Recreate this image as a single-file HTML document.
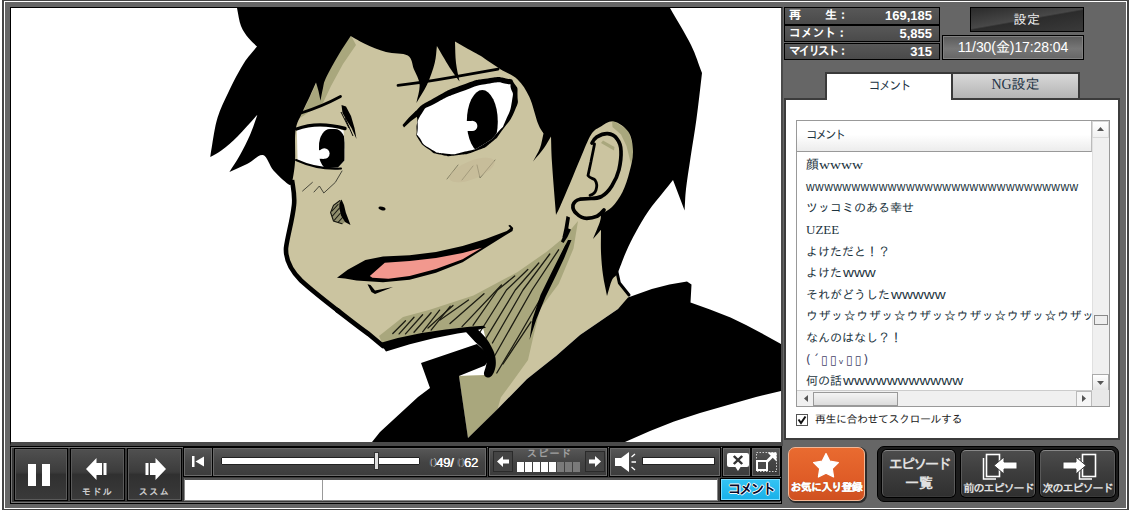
<!DOCTYPE html>
<html lang="ja"><head><meta charset="utf-8"><title>player</title>
<style>
html,body{margin:0;padding:0;background:#fff;}
body{width:1131px;height:510px;overflow:hidden;position:relative;font-family:"Liberation Sans","IPAGothic","Noto Sans CJK JP",sans-serif;}
.abs{position:absolute;box-sizing:border-box;}
#outer{left:2px;top:-1px;width:1127px;height:512px;background:#666;border:2px solid #444;}
#outer2{left:4px;top:1px;width:1123px;height:508px;border:1px solid #fff;}
#video{left:10px;top:7px;width:773px;height:439px;border:1px solid #000;border-right:2px solid #4a4a4a;border-bottom:4px solid #4a4a4a;background:#fff;}
.stat{left:784px;width:156px;border:1px solid #000;background:linear-gradient(#585858,#4a4a4a);color:#fff;font-weight:bold;font-size:12px;line-height:15px;}
.stat b{position:absolute;left:4px;top:0;letter-spacing:0px}
.stat i{position:absolute;right:7px;top:0;font-style:normal;font-size:13px}
#tabs .t{font-size:12px;color:#234;text-align:center;}
.row{position:absolute;left:9px;white-space:nowrap;font-size:12px;line-height:16px;color:#1c3440;height:16px}
.ser{font-family:"Liberation Serif","IPAGothic",serif;font-size:13px}
.btn{background:linear-gradient(#505050,#3c3c3c 45%,#303030 50%,#3a3a3a);border:1px solid #000;box-shadow:inset 0 0 0 1px #5a5a5a;}
.sec{background:linear-gradient(#585858,#444 50%,#3c3c3c);border:1px solid #000;box-shadow:inset 0 0 0 1px #6a6a6a;}
.ep{border-radius:5px;background:linear-gradient(#4c4c4c,#3c3c3c 50%,#303030);border:1px solid #5a5a5a;border-top-color:#888;border-bottom-color:#3a3a3a;box-shadow:0 0 0 1px #000}
.eptx{text-align:center;font-weight:bold;color:#e0e0e0;white-space:nowrap}
.fw{display:inline-block;transform:scaleX(1.260);transform-origin:0 50%;margin-left:1px}
</style></head><body>
<div id="outer" class="abs"></div><div id="outer2" class="abs"></div>
<div id="video" class="abs"></div>
<svg class="abs" style="left:11px;top:8px" width="770" height="434" viewBox="11 8 770 434">
<rect x="11" y="8" width="770" height="434" fill="#fff"/>
<!-- skin -->
<path id="skin" fill="#cbc4a0" d="M300,60 L294,130 L291,182 L293,200 L289,225 L284,248.500 L288,266 L300,282 L338,313 L367.600,335 L385,349 L414.700,341 L450,329 L483,327 L488,348 L494,363 L490,375 L459,376 L468,438 L497.600,409 L527,379 L556,356 L580,335 L618,309 L630,298 L619,283 L616.500,271 L622,256 L650,200 L630,186 L637,157 L633,133 L616,118 L560,50 L400,30 L340,35 Z"/>
<!-- neck shadow -->
<path fill="#a9a77d" d="M379,336 L403,317 L429,310 L473.500,295.600 L517.600,272 L547,251.500 L564.700,236.800 L578,221 L573.500,248.500 L558.800,283.800 L540,309 L533,338 L528,360 L514,379.600 L500.800,397.600 L497.600,409 L468,438 L459,376 L490,375 L494,363 L488,348 L483,327 L450,329 L414.7,341 L385,349 Z"/>
<!-- forehead hair shadow -->
<path fill="#a9a77d" d="M300,118 L316,84 L330,66 L350.700,35 L356,45 L343,64 L331,86 L323,103 L312,110 Z"/>
<!-- ear shadow -->
<path fill="#a9a77d" d="M612,120 L628,130 L634.500,150 L631,164 L626.500,146 L621,134.500 L612.500,127 Z"/>
<path fill="#a9a77d" d="M601,143 L614,150.500 L614.500,147 L603,140.500 Z"/>
<!-- hatch -->
<g stroke="#1c1c12" stroke-width="1.300" stroke-linecap="round" stroke-linejoin="round" fill="none">
<path d="M566,245.4 L543.5,293.5 L520,334 L496.8,373"/>
<path d="M558.6,249.8 L532,290 L494,357"/>
<path d="M549.8,254 L523,290 L492.4,343"/>
<path d="M538.8,263 L515.3,290 L485.3,339.4"/>
<path d="M527.8,269.5 L506.5,290 L480,332"/>
<path d="M514.7,276 L497.6,290 L473,325.3"/>
<path d="M501.5,285 L462,326.6"/>
<path d="M484,293.7 L450,323.5"/>
<path d="M468.5,300 L440,320"/>
<path d="M531,321.8 L503,364"/>
<path d="M453,305.500 L428,328"/>
<path d="M405.5,320.7 L392.8,333.5"/>
<path d="M414.0,317.3 L399.1,333.9"/>
<path d="M422.6,314.8 L405.5,333.9"/>
<path d="M431.1,312.7 L414.0,332.2"/>
<path d="M439.6,310.1 L422.6,331.8"/>
<path d="M450.2,306.3 L431.1,330.1"/>
</g>
<!-- neck tendon -->
<path fill="#000" d="M571.500,240 L564,258.500 L556,275.500 L545.500,297 L536.500,319 L529.500,340 L532.500,319 L540.500,295 L551.500,272.500 L560,255.500 L568,240 Z"/>
<path fill="#000" d="M567,228 L571,229.500 L567.500,237 L563.500,243 L561,241.500 L563.500,235 Z"/>
<path fill="#000" d="M566.500,216 L570,217.500 L568,230 L564.500,238 L562.500,237 L564.500,228 Z"/>
<!-- clothing -->
<path fill="#000" d="M421,363 L477,344 L486,352 L488,361 L485,365.500 L459,376 L468,438 L497.600,409 L527,379 L556,356 L580,335 L618,309 L628,297.6 L651.800,289 L669.400,284.400 L687,281.500 L691.500,284.400 L690.500,302.500 L710,309.500 L730.500,317.500 L746,325 L760.700,332.800 L781,344 L781,391 L756,397 L730.500,404.300 L700,413 L674,421.500 L650,431 L625,442 L372,442 L380,432 L418,397 L430,388 Z"/>
<path fill="none" stroke="#000" stroke-width="3" stroke-linecap="round" d="M616.500,270 L619.400,283 L629,295"/>
<!-- jaw line -->
<path fill="#000" d="M379,341.500 L381,342.700 L397.800,338 L421.700,333 L445.600,329.600 L469.600,326.700 L483.500,325.800 L486,327.500 L482.700,328.600 L474.300,331 L457.600,333.400 L433.700,338.300 L409.800,344.300 L386,351.500 Z"/>
<path fill="#000" d="M466,328 L474,327 C480,331 488,338 493.500,351 C496,357 496.500,364 495,369 C494,373 492,377 488.700,377.600 C485.500,377.600 483.500,375.500 484,372.500 C485,369 487,365 486.800,358 C485.500,352 482,347.500 478,344.500 C474,341 470,336 466,332 Z"/>
<!-- face outline -->
<path fill="none" stroke="#000" stroke-width="4.600" stroke-linejoin="round" d="M292,180 C293.500,190 295,196 294,205 C292.500,220 287.500,236 286,248 C285.500,258 288.500,268 301,280.500 C312,290.500 326,301.500 339,311.500"/>
<path fill="none" stroke="#000" stroke-width="4.800" stroke-linejoin="round" stroke-linecap="round" d="M337,310 C348,318.500 358,326.500 368.600,334 L383,346"/>
<!-- hair -->
<path id="hair" fill="#000" d="M237.0,8.0 C238.3,14.0 239.1,21.0 241.0,26.0 C242.9,31.0 245.8,34.6 248.5,38.0 C251.2,41.4 254.2,43.7 257.0,46.5 C252.7,52.0 248.7,55.6 244.0,63.0 C239.3,70.4 233.4,81.9 229.0,91.0 C224.6,100.1 220.5,108.3 217.6,117.6 C214.7,126.9 213.0,140.4 211.8,147.0 C210.6,153.6 210.8,153.7 210.3,157.0 C214.2,154.7 217.4,153.5 222.0,150.0 C226.6,146.5 232.1,141.9 238.0,136.0 C243.9,130.1 250.9,121.8 257.4,114.7 C254.9,121.5 252.9,128.3 250.0,135.0 C247.1,141.7 243.4,148.8 240.0,155.0 C236.6,161.2 232.9,166.3 229.4,172.0 C235.3,169.3 241.4,166.8 247.0,164.0 C252.6,161.2 258.6,153.9 263.0,155.0 C267.4,156.1 269.3,165.8 273.5,170.6 C277.7,175.4 284.9,181.8 288.0,184.0 C291.1,186.2 290.7,184.0 292.0,184.0 C293.0,176.7 294.4,171.0 295.0,162.0 C295.6,153.0 294.4,138.2 295.6,130.0 C296.8,121.8 299.6,118.7 302.0,113.0 C304.4,107.3 307.7,101.1 310.0,96.0 C312.3,90.9 314.0,87.0 316.0,82.5 C316.8,85.3 317.8,88.0 318.5,91.0 C319.2,94.0 319.8,97.5 320.5,100.8 C321.3,96.5 322.1,91.8 323.0,88.0 C323.9,84.2 323.3,83.6 325.9,78.0 C328.5,72.4 334.7,61.5 338.8,54.5 C342.9,47.5 346.7,42.2 350.7,36.0 C355.4,38.6 358.8,41.0 364.7,43.7 C370.6,46.4 378.8,50.0 386.0,52.0 C393.2,54.0 403.1,52.7 407.8,55.6 C412.5,58.5 412.0,64.8 414.0,69.6 C416.0,74.4 419.2,79.1 419.6,84.7 C420.0,90.3 417.5,96.9 416.4,103.0 C419.9,96.9 423.9,91.4 427.0,84.7 C430.1,78.0 433.1,69.5 434.7,63.0 C436.3,56.5 436.2,51.6 436.9,45.9 C441.6,53.8 447.2,63.7 451.0,69.6 C454.8,75.5 456.7,77.5 459.5,81.4 C458.3,75.3 456.8,69.6 456.0,63.0 C455.2,56.4 455.3,48.7 455.0,41.6 C459.3,44.1 463.8,46.7 468.0,49.0 C472.2,51.3 474.7,52.3 480.0,55.6 C485.3,58.9 493.7,65.0 500.0,69.0 C506.3,73.0 512.7,74.7 517.6,79.4 C522.5,84.1 526.0,89.7 529.4,97.0 C532.8,104.3 535.6,117.4 538.0,123.5 C540.4,129.6 541.7,130.2 543.5,133.5 C542.3,138.3 541.8,143.3 540.0,148.0 C538.2,152.7 535.3,157.0 533.0,161.5 C536.7,157.0 541.0,152.2 544.0,148.0 C547.0,143.8 548.7,140.3 551.0,136.5 C551.3,145.3 551.2,149.9 552.0,163.0 C552.8,176.1 554.7,197.7 556.0,215.0 C557.3,212.3 557.6,212.3 560.0,206.8 C562.4,201.3 567.1,190.3 570.6,182.0 C574.1,173.7 577.6,164.9 581.0,157.0 C584.4,149.1 587.8,139.7 591.0,134.7 C594.2,129.7 596.2,129.2 600.0,127.0 C603.8,124.8 609.0,120.6 613.8,121.4 C618.5,122.2 625.3,127.1 628.5,132.0 C631.7,136.9 632.8,144.4 633.0,151.0 C633.2,157.6 631.2,165.0 629.5,171.8 C627.8,178.6 625.4,186.1 622.5,192.0 C619.6,197.9 615.6,203.3 612.0,207.0 C608.4,210.7 604.7,211.7 601.0,214.0 C600.7,216.5 601.3,217.3 600.0,221.5 C598.7,225.7 595.3,233.2 593.0,239.0 C595.7,235.9 598.3,232.8 601.0,229.7 C601.0,237.1 600.7,244.4 601.0,252.0 C601.3,259.6 602.0,267.7 603.0,275.0 C604.0,282.3 605.7,289.0 607.0,296.0 C608.7,290.7 610.2,283.8 612.0,280.0 C613.8,276.2 615.3,277.7 617.6,273.0 C619.9,268.3 622.9,258.9 626.0,252.0 C629.1,245.1 632.2,238.6 636.0,231.8 C639.8,225.0 644.0,217.5 648.5,211.0 C653.0,204.5 658.9,197.8 663.0,192.6 C667.1,187.4 669.7,184.2 673.0,180.0 C676.9,190.2 680.7,200.3 684.6,210.5 C685.1,203.3 685.0,197.9 686.0,189.0 C687.0,180.1 688.9,168.7 690.6,157.0 C692.4,145.3 694.6,132.8 696.5,118.8 C698.4,104.8 700.2,88.3 702.0,73.0 C698.3,63.7 696.3,55.8 691.0,45.0 C685.7,34.2 677.0,20.3 670.0,8.0 C525.7,8.0 381.3,8.0 237.0,8.0 Z"/>
<!-- ear lines -->
<path fill="none" stroke="#000" stroke-width="3.700" stroke-linecap="round" stroke-linejoin="round" d="M592,143 C594,139 596,137.500 597,136.800 C601,134.500 604,133.500 607.600,133.700 C612,134 615,136 617,138.800 C619.500,142 621,146 621,151 C621.300,157 620.500,163 619,169.700 C617.500,176 615,181 611.800,186 C609,190.500 605,194.500 601.500,196.500 C598,198.300 595,198.500 591,198.500 L580,199.200 C577,199.800 574,202 573,205 C572.500,208.500 574,211.500 576.500,213.500 C579.500,216.500 583,218.500 586.800,218.400 C590.500,218.300 594,217.500 597,216.300 C600,214.500 602,212.500 604,210"/>
<path fill="none" stroke="#000" stroke-width="2.800" stroke-linecap="round" stroke-linejoin="round" d="M594.500,144 C593.500,150 592,156 591,161.500 L588,175.500 C590,178.500 593.500,178.500 595,180 C597,183 597,187 596,190 C595,193 592.500,194.500 590,195.400"/>
<!-- right eye -->
<path fill="#000" d="M415.6,111.5 C421.8,104.2 420.2,105.9 436.0,97.0 C451.8,88.1 445.8,90.9 463.0,84.7 C480.2,78.5 473.3,80.6 487.6,78.5 C501.9,76.4 497.1,76.8 506.0,78.5 C514.9,80.2 510.6,78.2 514.4,83.7 C518.2,89.2 517.5,85.7 517.5,95.0 C517.5,104.3 519.6,99.7 514.4,111.5 C509.2,123.3 509.5,120.3 502.0,130.5 C494.5,140.7 500.1,135.3 491.8,142.0 C483.5,148.7 488.7,146.1 477.0,150.5 C465.3,154.9 469.1,153.8 456.8,155.2 C444.5,156.6 449.3,156.5 440.0,154.6 C430.7,152.7 436.1,154.5 429.0,149.5 C421.9,144.5 422.8,146.0 418.7,139.5 C414.6,133.0 417.1,136.8 416.6,130.0 C416.1,123.2 417.6,125.2 417.3,119.0 C417.0,112.8 409.4,118.8 415.6,111.5 Z"/>
<path fill="#000" d="M402.500,125 L409,117.500 L416,110.800 L420,114.500 L411,121 L404,127.500 Z"/>
<path fill="#fff" d="M421.8,113.5 C427.9,104.5 422.3,110.5 436.0,103.0 C449.7,95.5 445.8,97.4 463.0,91.0 C480.2,84.6 473.3,86.1 487.6,83.7 C501.9,81.3 498.2,82.0 506.0,83.7 C513.8,85.4 509.0,83.0 511.0,88.8 C513.0,94.6 513.7,90.7 512.0,101.0 C510.3,111.3 510.7,109.4 506.0,119.7 C501.3,130.0 505.5,123.8 498.0,132.0 C490.5,140.2 494.5,137.9 483.5,144.4 C472.5,150.9 477.3,148.5 465.0,151.6 C452.7,154.7 458.2,154.7 446.5,153.7 C434.8,152.7 438.9,153.7 430.0,148.5 C421.1,143.3 423.8,144.2 419.7,138.0 C415.6,131.8 416.9,138.2 417.6,130.0 C418.3,121.8 415.7,122.5 421.8,113.5 Z"/>
<clipPath id="re"><path d="M421.8,113.5 C427.9,104.5 422.3,110.5 436.0,103.0 C449.7,95.5 445.8,97.4 463.0,91.0 C480.2,84.6 473.3,86.1 487.6,83.7 C501.9,81.3 498.2,82.0 506.0,83.7 C513.8,85.4 509.0,83.0 511.0,88.8 C513.0,94.6 513.7,90.7 512.0,101.0 C510.3,111.3 510.7,109.4 506.0,119.7 C501.3,130.0 505.5,123.8 498.0,132.0 C490.5,140.2 494.5,137.9 483.5,144.4 C472.5,150.9 477.3,148.5 465.0,151.6 C452.7,154.7 458.2,154.7 446.5,153.7 C434.8,152.7 438.9,153.7 430.0,148.5 C421.1,143.3 423.8,144.2 419.7,138.0 C415.6,131.8 416.9,138.2 417.6,130.0 C418.3,121.8 415.7,122.5 421.8,113.5 Z"/></clipPath>
<g clip-path="url(#re)"><ellipse cx="482.300" cy="121.500" rx="15.500" ry="31.500" fill="#000"/><circle cx="472.200" cy="125.900" r="5.200" fill="#fff"/><rect x="462" y="121" width="10" height="10" fill="#fff"/></g>
<path fill="none" stroke="#000" stroke-width="2.800" stroke-linecap="round" d="M398,85.300 Q420,83 450,77.700 T498,69.200"/>
<!-- left eye -->
<path fill="#fff" d="M296.800,129 L315,126 L333,127 L343.500,130.600 L344.500,143 L344.400,160.600 L338,167.600 L320.600,168.500 L297.600,160.600 Z"/>
<clipPath id="le"><path d="M296.800,129 L315,126 L333,127 L343.500,130.600 L344.500,143 L344.400,160.600 L338,167.600 L320.600,168.500 L297.600,160.600 Z"/></clipPath>
<g clip-path="url(#le)"><rect x="319" y="129" width="27" height="41" rx="11" ry="17" fill="#000"/><circle cx="324.300" cy="153.500" r="5.300" fill="#fff"/><rect x="316" y="150.200" width="8" height="8.600" fill="#fff"/></g>
<path fill="none" stroke="#000" stroke-width="3.400" stroke-linecap="round" d="M296.500,129 Q318,121 345,128.500"/>
<path fill="none" stroke="#000" stroke-width="2" stroke-linecap="round" d="M296,160 Q318,170 341,168.500"/>
<path fill="none" stroke="#000" stroke-width="2.800" stroke-linecap="round" d="M301,113 Q322,106.500 340.500,96.500"/>
<!-- nose bridge -->
<path fill="#000" d="M341.500,105 L346,106.500 L351,116 L354.500,128 L356.500,139 L351.500,128 L347,121 L342.500,113 Z"/>
<path fill="none" stroke="#000" stroke-width="1" d="M341,112 L349,128 M345,118 L353,136"/>
<!-- nose -->
<path fill="#8f8d6c" d="M340.500,200.500 L333.500,205.300 L330.400,212.400 L333.500,221 L342.400,224 L345,222 L339.700,212.400 Z"/>
<path fill="none" stroke="#15150f" stroke-width="1.100" stroke-linecap="round" d="M340,200.500 L333.500,205.300 L330.600,212.400 L333.500,221 L342,223.800 M338,204.500 L332,211 M339,208.500 L332.500,216 M340.500,213 L334.500,220 M342.500,217.500 L338,222.500"/>
<path fill="#000" d="M341.500,199.500 L344,205 L345.800,212.400 L350.500,225 L345,222 L341,215.500 L339.300,208 L339.500,203 Z"/>
<ellipse cx="382" cy="208.500" rx="3.600" ry="1.700" transform="rotate(15 382 208.500)" fill="#000"/>
<!-- blush -->
<g stroke="#3a3a30" stroke-width="0.900" fill="none" stroke-linecap="round">
<path d="M302.600,191 L312.400,182.400"/><path d="M314,192 L319.400,186 L323.800,193 L335.300,182.400 L342,171"/>
</g>
<g stroke="#7d7960" stroke-width="0.900" fill="none" stroke-linecap="round">
<path d="M447,179 L458,165"/><path d="M462,180 L473,166"/><path d="M477,165 L480,178 L495,160"/>
</g>
<ellipse cx="472" cy="170" rx="24" ry="9" transform="rotate(-22 472 170)" fill="#c4b594" opacity="0.500"/>
<!-- mouth -->
<path fill="#000" d="M337,277.800 L347.700,269.800 L365.400,260 L383,256.600 L409.600,255.300 L436,252 L462.600,246 L485.600,238.900 L506.800,230.900 L510.500,228 L508.300,225.800 L510,224.800 L513.200,228 L512.500,231 L505,235.500 L489,245.500 L462.600,262.200 L436,272.800 L409.600,279.800 L383,282.300 L356.500,280.600 L345,278.500 Z"/>
<path fill="#f2988e" d="M369.800,276 L384.800,262.700 L409.600,261 L436,258 L462.600,253 L482,247.700 L462.600,259.200 L436,269 L409.600,276 L388.400,278.700 L372.400,277.800 Z"/>
<path fill="#000" d="M367.500,284.200 L370.500,285 L375,290.500 L393,287 L375,294 L371.500,292 Z"/>
</svg>

<!-- stats -->
<div class="abs stat" style="top:7px;height:18px"><b style="letter-spacing:0">再<span style="display:inline-block;width:24px"></span>生：</b><i>169,185</i></div>
<div class="abs stat" style="top:25px;height:17px"><b style="letter-spacing:-0.3px">コメント：</b><i>5,855</i></div>
<div class="abs stat" style="top:43px;height:17px"><b style="letter-spacing:-2.4px">マイリスト：</b><i>315</i></div>
<div class="abs" style="left:970px;top:7px;width:114px;height:25px;border:1px solid #000;background:linear-gradient(170deg,#2a2a2a,#484848 48%,#2c2c2c 52%,#3a3a3a);color:#eee;font-size:13px;line-height:23px;text-align:center;letter-spacing:0.500px">設定</div>
<div class="abs" style="left:942px;top:35px;width:142px;height:25px;border:1px solid #000;background:linear-gradient(#5a5a5a,#777 55%,#666);box-shadow:inset 0 0 0 1px #808080;color:#fff;font-size:14px;line-height:22px;text-align:center;letter-spacing:-0.080px">11/30(金)17:28:04</div>
<!-- tabs -->
<div id="tabs">
<div class="abs" style="left:825px;top:72px;width:255px;height:29px;background:#3a3a3a"></div>
<div class="abs t" style="left:827px;top:74px;width:124px;height:27px;background:#fff;line-height:25px;letter-spacing:-2.200px;font-size:12.500px">コメント</div>
<div class="abs t ser" style="left:953px;top:74px;width:125px;height:24px;background:linear-gradient(#d8d8d8,#b4b4b4);line-height:22px;font-size:14px">NG設定</div>
</div>
<!-- panel -->
<div class="abs" style="left:784px;top:98px;width:336px;height:342px;border:2px solid #3c3c3c;background:#fff;border-top-color:#3c3c3c"></div>
<div class="abs" style="left:827px;top:96px;width:124px;height:6px;background:#fff"></div>
<!-- list -->
<div class="abs" style="left:796px;top:120px;width:314px;height:287px;border:1px solid #999;background:#fff;overflow:hidden">
  <div class="abs" style="left:0;top:0;width:295px;height:31px;background:linear-gradient(#fff,#fff 45%,#ececec);border-bottom:1px solid #999;border-right:1px solid #bbb"></div>
  <div class="row" style="top:6px;letter-spacing:-2.600px">コメント</div>
  <div class="abs" style="left:0;top:31px;width:295px;height:238px;overflow:hidden">
  <div class="row ser" style="top:5px">顔<span style="display:inline-block;transform:scaleX(1.170);transform-origin:0 50%">wwww</span></div>
  <div class="row" style="top:27px;letter-spacing:0.42px">wwwwwwwwwwwwwwwwwwwwwwwwwwwwww</div>
  <div class="row" style="top:48px">ツッコミのある幸せ</div>
  <div class="row ser" style="top:70px">UZEE</div>
  <div class="row" style="top:92px">よけただと！？</div>
  <div class="row" style="top:113px">よけた<span class="fw">www</span></div>
  <div class="row" style="top:135px">それがどうした<span class="fw">wwwww</span></div>
  <div class="row" style="top:156px;letter-spacing:0.550px">ウザッ☆ウザッ☆ウザッ☆ウザッ☆ウザッ☆ウザッ☆ウザッ</div>
  <div class="row" style="top:178px">なんのはなし？！</div>
  <div class="row" style="top:200px;font-size:12px;letter-spacing:2.200px;font-family:'DejaVu Sans',sans-serif;color:#446">(´▯▯ᵥ▯▯)</div>
  <div class="row" style="top:221px">何の話<span class="fw">wwwwwwwwwww</span></div>
  </div>
  <!-- v scrollbar -->
  <div class="abs" style="left:295px;top:0;width:17px;height:269px;background:#f0f0f0;border-left:1px solid #e0e0e0"></div>
  <div class="abs" style="left:295px;top:0;width:17px;height:17px;border:1px solid #d8d8d8;background:linear-gradient(#fff,#f0f0f0)"></div>
  <svg class="abs" style="left:300px;top:6px" width="7" height="4"><path d="M0,4 L3.5,0 L7,4 Z" fill="#555"/></svg>
  <div class="abs" style="left:297px;top:194px;width:14px;height:10px;border:1px solid #888;background:#eee"></div>
  <div class="abs" style="left:295px;top:253px;width:17px;height:17px;border:1px solid #aaa;background:linear-gradient(#fff,#e4e4e4)"></div>
  <svg class="abs" style="left:300px;top:260px" width="7" height="4"><path d="M0,0 L3.5,4 L7,0 Z" fill="#555"/></svg>
  <!-- h scrollbar -->
  <div class="abs" style="left:0;top:269px;width:295px;height:17px;background:#f0f0f0;border-top:1px solid #ccc"></div>
  <svg class="abs" style="left:7px;top:274px" width="4" height="7"><path d="M4,0 L0,3.5 L4,7 Z" fill="#555"/></svg>
  <div class="abs" style="left:16px;top:271px;width:85px;height:14px;border:1px solid #999;background:linear-gradient(#f4f4f4,#dcdcdc)"></div>
  <div class="abs" style="left:279px;top:270px;width:16px;height:16px;border:1px solid #bbb;background:#f6f6f6"></div>
  <svg class="abs" style="left:285px;top:274px" width="4" height="7"><path d="M0,0 L4,3.5 L0,7 Z" fill="#555"/></svg>
  <div class="abs" style="left:295px;top:269px;width:17px;height:17px;background:#e8e8e8"></div>
</div>
<!-- checkbox -->
<div class="abs" style="left:796px;top:414px;width:12px;height:12px;border:1px solid #555;background:#fff"></div>
<svg class="abs" style="left:797px;top:415px" width="10" height="10"><path d="M1.5,4.5 L4,8 L8.500,1.500" fill="none" stroke="#111" stroke-width="2"/></svg>
<div class="abs" style="left:815px;top:412px;font-size:11px;line-height:14px;color:#222;white-space:nowrap;letter-spacing:-0.500px">再生に合わせてスクロールする</div>

<!-- control bar -->
<div class="abs" style="left:10px;top:446px;width:772px;height:58px;background:#3a3a3a;border:1px solid #000;box-shadow:inset 0 0 0 1px #777"></div>
<div class="abs btn" style="left:14px;top:448px;width:54px;height:53px"></div>
<div class="abs" style="left:28px;top:464px;width:8px;height:22px;background:#fff"></div>
<div class="abs" style="left:42px;top:464px;width:8px;height:22px;background:#fff"></div>
<div class="abs btn" style="left:70px;top:448px;width:55px;height:53px"></div>
<svg class="abs" style="left:86px;top:458px" width="21" height="22" viewBox="0 0 21 22"><path d="M0,11 L10.500,0 L10.500,5 L16,5 L16,17 L10.500,17 L10.500,22 Z M17.500,5 L20.500,5 L20.500,17 L17.500,17 Z" fill="#fff"/></svg>
<div class="abs" style="left:70px;top:487px;width:55px;text-align:center;font-size:9px;line-height:11px;font-weight:bold;color:#ccc;letter-spacing:1.500px">モドル</div>
<div class="abs btn" style="left:127px;top:448px;width:55px;height:53px"></div>
<svg class="abs" style="left:145px;top:458px" width="21" height="22" viewBox="0 0 21 22"><path d="M21,11 L10.500,0 L10.500,5 L5,5 L5,17 L10.500,17 L10.500,22 Z M3.500,5 L0.500,5 L0.500,17 L3.500,17 Z" fill="#fff"/></svg>
<div class="abs" style="left:127px;top:487px;width:55px;text-align:center;font-size:9px;line-height:11px;font-weight:bold;color:#ccc;letter-spacing:1.500px">ススム</div>
<!-- seek -->
<div class="abs sec" style="left:183px;top:447px;width:30px;height:30px"></div>
<svg class="abs" style="left:192px;top:456px" width="13" height="11" viewBox="0 0 13 11"><path d="M0,0 H2.500 V11 H0 Z M3.500,5.500 L12,0.500 V10.500 Z" fill="#fff"/></svg>
<div class="abs sec" style="left:212px;top:447px;width:275px;height:30px"></div>
<div class="abs" style="left:221px;top:457px;width:199px;height:8px;background:#fff;border:1px solid #222;border-radius:1px"></div>
<div class="abs" style="left:374px;top:452px;width:5px;height:18px;background:#ddd;border:1px solid #333"></div>
<div class="abs" style="left:418px;top:455px;width:60px;font-size:13px;line-height:16px;color:#fff;white-space:pre;font-family:'Liberation Sans',sans-serif;letter-spacing:-0.200px;text-align:right;text-shadow:0.400px 0 #fff"><span style="color:#484848">0</span>49/ <span style="color:#484848">0</span>62</div>
<!-- speed -->
<div class="abs sec" style="left:488px;top:447px;width:120px;height:30px"></div>
<div class="abs" style="left:493px;top:451px;width:20px;height:21px;border:1px solid #2a2a2a;background:#444"></div>
<svg class="abs" style="left:497px;top:456px" width="12" height="11" viewBox="0 0 12 11"><path d="M0,5.500 L6,0 V3.500 H12 V7.500 H6 V11 Z" fill="#fff"/></svg>
<div class="abs" style="left:516px;top:448px;width:67px;text-align:center;font-size:10px;line-height:12px;font-weight:bold;color:#a0a0a0;letter-spacing:1.200px">スピード</div>
<svg class="abs" style="left:517px;top:462px" width="64" height="10" viewBox="0 0 64 10"><g fill="#fff"><rect x="0" y="0" width="7" height="10"/><rect x="8" y="0" width="7" height="10"/><rect x="16" y="0" width="7" height="10"/><rect x="24" y="0" width="7" height="10"/><rect x="32" y="0" width="7" height="10"/></g><g fill="#7a7a7a"><rect x="40" y="0" width="7" height="10"/><rect x="48" y="0" width="7" height="10"/><rect x="56" y="0" width="7" height="10"/></g></svg>
<div class="abs" style="left:585px;top:451px;width:20px;height:21px;border:1px solid #2a2a2a;background:#444"></div>
<svg class="abs" style="left:589px;top:456px" width="12" height="11" viewBox="0 0 12 11"><path d="M12,5.500 L6,0 V3.500 H0 V7.500 H6 V11 Z" fill="#fff"/></svg>
<!-- volume -->
<div class="abs sec" style="left:609px;top:447px;width:112px;height:30px"></div>
<svg class="abs" style="left:615px;top:452px" width="22" height="20" viewBox="0 0 22 20"><path d="M0,6 H6 L14,0 V20 L6,14 H0 Z" fill="#fff"/><path d="M16.500,5 L20,2 M16.500,10 H21 M16.500,15 L20,18" stroke="#fff" stroke-width="1.300" fill="none"/></svg>
<div class="abs" style="left:642px;top:457px;width:73px;height:8px;background:#fff;border:1px solid #222"></div>
<!-- comment off / fullscreen -->
<div class="abs sec" style="left:722px;top:447px;width:29px;height:30px"></div>
<svg class="abs" style="left:727px;top:453px" width="22" height="19" viewBox="0 0 21 19" preserveAspectRatio="none"><path d="M2,0 H19 Q21,0 21,2 V12 Q21,14 19,14 H13 L10.500,18 L8,14 H2 Q0,14 0,12 V2 Q0,0 2,0 Z" fill="#fff"/><path d="M6.500,3 L14.500,11 M14.500,3 L6.500,11" stroke="#333" stroke-width="2.400"/></svg>
<div class="abs sec" style="left:751px;top:447px;width:30px;height:30px"></div>
<svg class="abs" style="left:756px;top:452px" width="21" height="20" viewBox="0 0 21 20"><rect x="0.500" y="0.500" width="20" height="19" fill="none" stroke="#ccc" stroke-width="1" stroke-dasharray="1.500 1.500"/><rect x="1" y="9" width="10" height="9" fill="#4a4a4a" stroke="#fff" stroke-width="2"/><path d="M11,9.500 L17.500,3" stroke="#fff" stroke-width="2.800"/><path d="M11.500,0.500 H20.500 V9.500 Z" fill="#fff"/></svg>
<!-- input -->
<div class="abs" style="left:184px;top:478px;width:534px;height:23px;background:#fff;border:1px solid #888;border-top:2px solid #555"></div>
<div class="abs" style="left:322px;top:480px;width:1px;height:21px;background:#999"></div>
<div class="abs" style="left:720px;top:478px;width:61px;height:23px;background:linear-gradient(#35c4f4,#18b0e8);border:1px solid #000;box-shadow:inset 0 0 0 1px #7adcff;color:#06082a;font-weight:bold;font-size:14px;line-height:21px;text-align:center;letter-spacing:-2.600px;text-shadow:1px 0 #fff,-1px 0 #fff,0 1px #fff,0 -1px #fff">コメント</div>
<!-- favorite -->
<div class="abs" style="left:788px;top:447px;width:77px;height:54px;border-radius:7px;background:linear-gradient(#e96b30,#df5c27 60%,#cf5120);border:1px solid #f3b795;box-shadow:1px 1px 0 1px #2a2a2a"></div>
<svg class="abs" style="left:813px;top:453px" width="26" height="27" viewBox="0 0 26 27"><path d="M13.0,0.5 L16.9,8.2 L25.4,9.5 L19.3,15.5 L20.6,24.0 L13.0,20.1 L5.4,24.0 L6.7,15.5 L0.6,9.5 L9.1,8.2 Z" fill="#fff" stroke="#fff" stroke-width="1.200" stroke-linejoin="round"/></svg>
<div class="abs" style="left:787px;top:481px;width:78px;text-align:center;font-size:11px;line-height:13px;font-weight:bold;color:#fff;letter-spacing:-0.800px;white-space:nowrap;text-shadow:0.500px 0 #fff,0 0 1px #8a3a10">お気に入り登録</div>
<!-- episode group -->
<div class="abs" style="left:877px;top:446px;width:242px;height:56px;background:#1c1c1c;border-radius:7px;border:1px solid #000"></div>
<div class="abs ep" style="left:882px;top:450px;width:73px;height:47px"></div>
<div class="abs ep" style="left:961px;top:450px;width:74px;height:47px"></div>
<div class="abs ep" style="left:1040px;top:450px;width:75px;height:47px"></div>
<div class="abs eptx" style="left:882px;top:455px;width:74px;font-size:14px;line-height:19px;letter-spacing:-1.900px">エピソード<br><span style="letter-spacing:0">一覧</span></div>
<svg class="abs" style="left:979px;top:453px" width="40" height="27" viewBox="0 0 40 27"><path d="M4.500,5 V26 H17" fill="none" stroke="#fff" stroke-width="1.500"/><rect x="7.500" y="1.500" width="13" height="22" fill="#3a3a3a" stroke="#fff" stroke-width="1.600"/><path d="M15,12.500 L25,4 V9 H38 V16 H25 V21 Z" fill="#fff" stroke="#3a3a3a" stroke-width="1"/></svg>
<div class="abs eptx" style="left:961px;top:481px;width:75px;font-size:11px;line-height:14px;letter-spacing:-1px">前のエピソード</div>
<svg class="abs" style="left:1057px;top:453px" width="40" height="27" viewBox="0 0 40 27"><path d="M22.500,5 V26 H35" fill="none" stroke="#fff" stroke-width="1.500"/><rect x="25.500" y="1.500" width="13" height="22" fill="#3a3a3a" stroke="#fff" stroke-width="1.600"/><path d="M29,12.500 L19,4 V9 H6 V16 H19 V21 Z" fill="#fff" stroke="#3a3a3a" stroke-width="1"/></svg>
<div class="abs eptx" style="left:1040px;top:481px;width:75px;font-size:11px;line-height:14px;letter-spacing:-1px">次のエピソード</div>

</body></html>
